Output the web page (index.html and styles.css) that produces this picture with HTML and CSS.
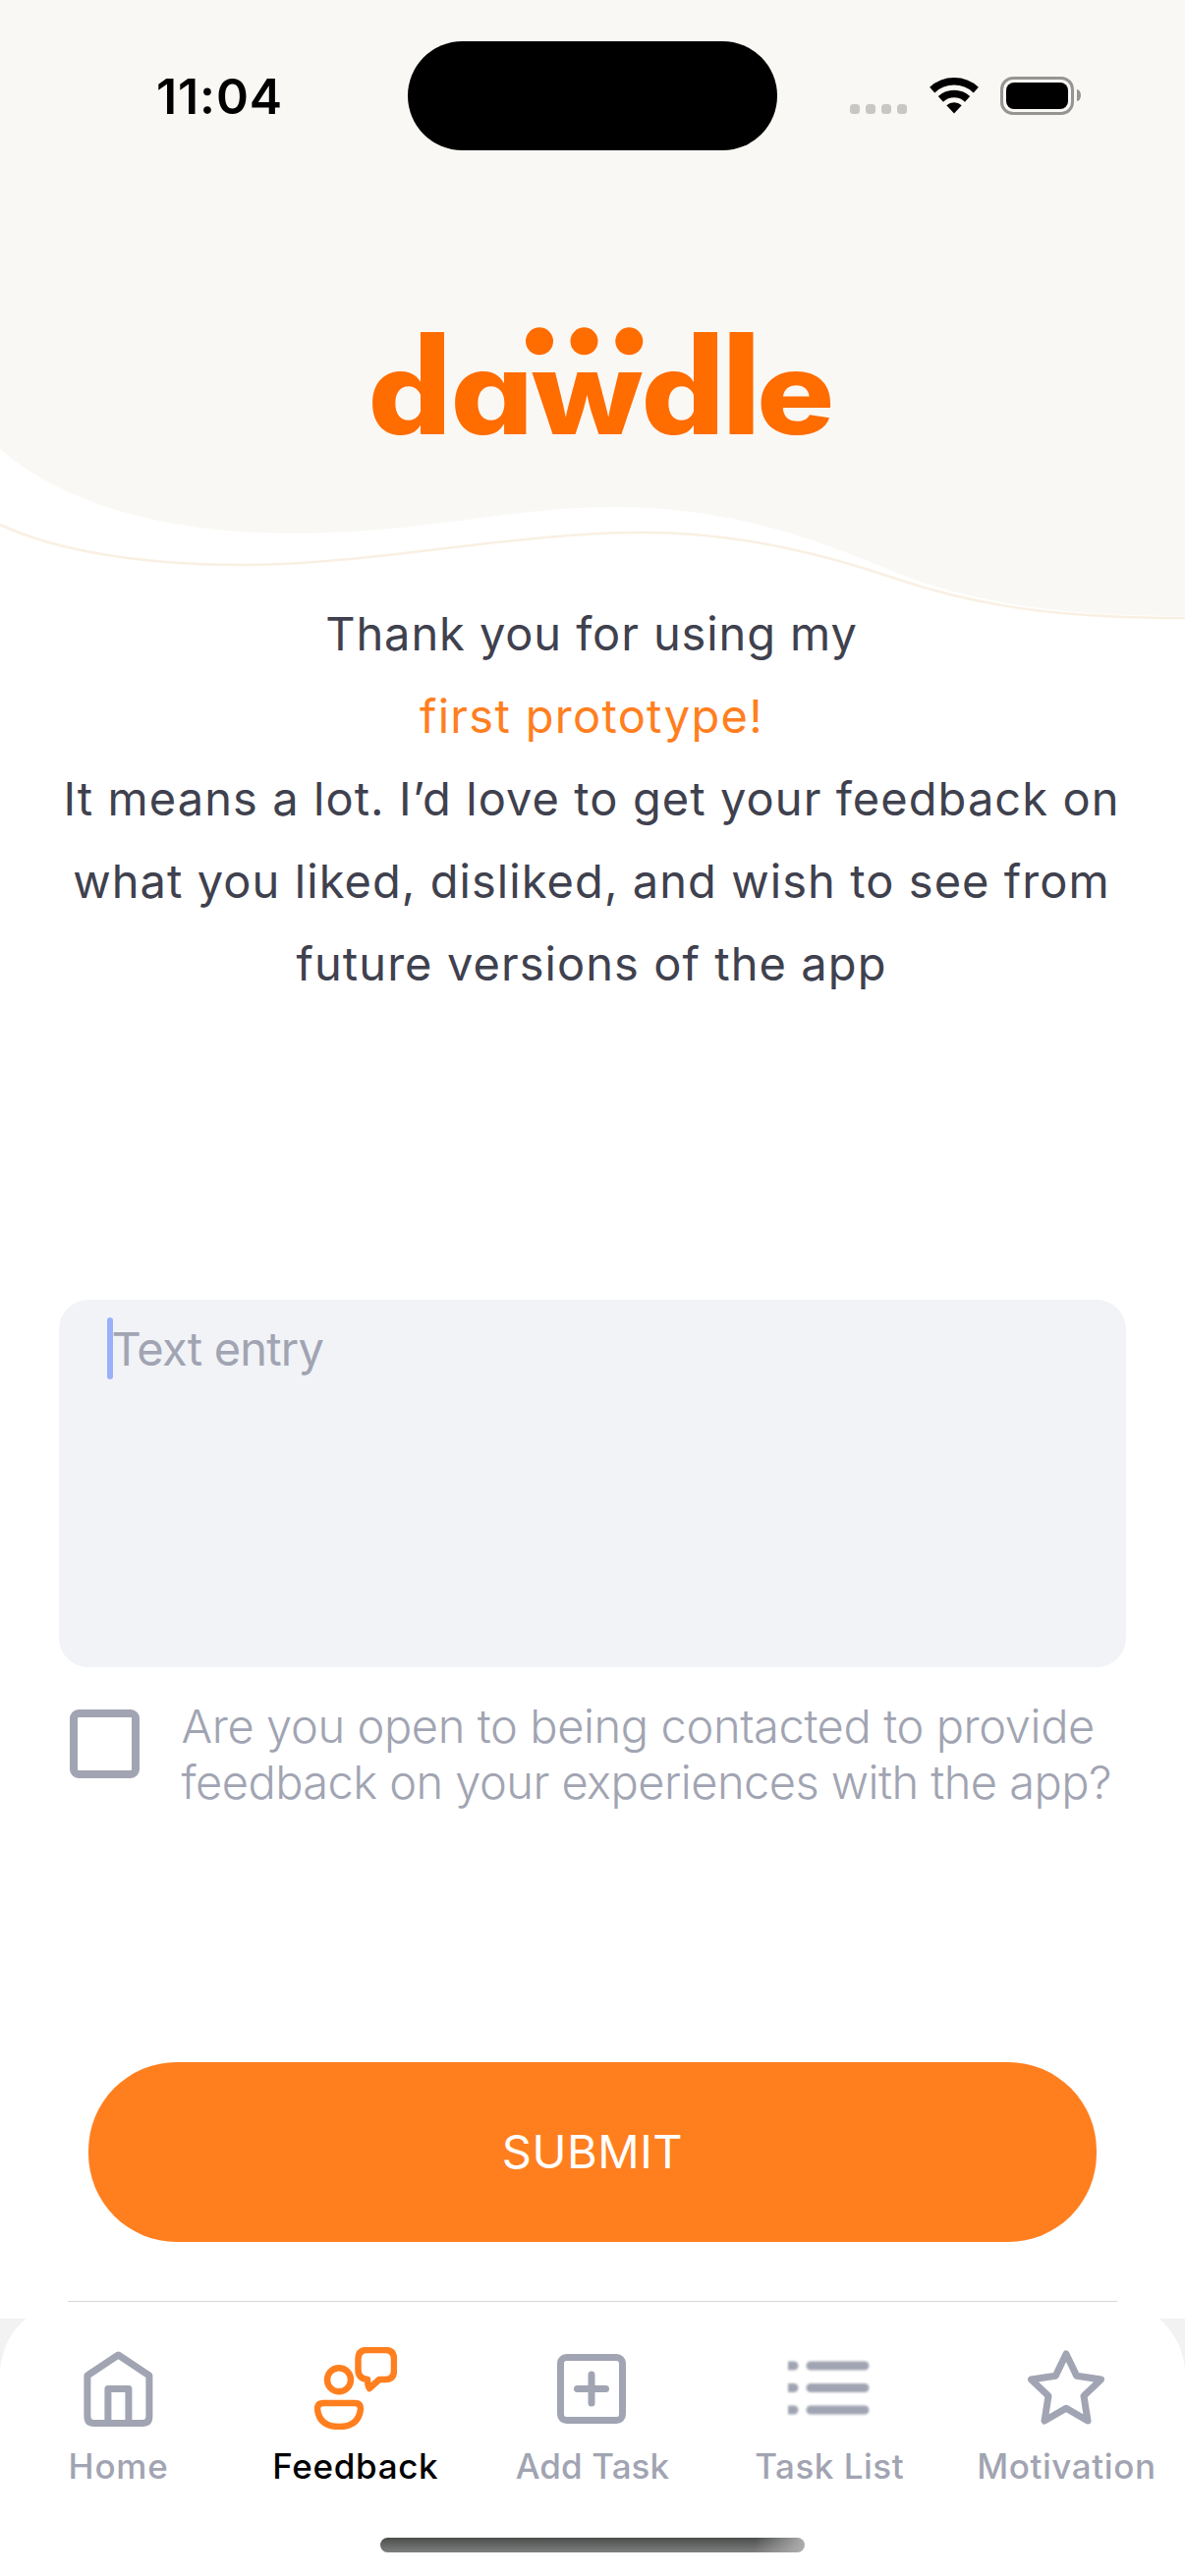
FILE: index.html
```html
<!DOCTYPE html>
<html lang="en">
<head>
<meta charset="utf-8">
<title>dawdle – Feedback</title>
<link rel="stylesheet" href="styles.css">
</head>
<body>
<main class="screen">
  <svg class="wave" width="1206" height="640" viewBox="0 0 1206 640" aria-hidden="true">
    <path class="wave-fill" d="M0 0H1206V627C1100 627 1010 619 923 587C850 558 760 516 625 516C520 516 430 543 296 543C165 543 60 510 0 457Z"/>
    <path class="wave-line" d="M0 534C60 562 150 575 246 575C380 575 520 542 654 542C760 542 850 568 915 590C1010 622 1100 629 1206 629"/>
  </svg>

  <header class="status">
    <div class="time">11:04</div>
    <div class="island"></div>
    <div class="indicators">
      <div class="signal"><i></i><i></i><i></i><i></i></div>
      <svg class="wifi" width="52" height="40" viewBox="0 0 52 40">
        <path class="wifi-arc" d="M3.7 13.6A32.7 32.7 0 0 1 48.3 13.6M12.4 22.9A20 20 0 0 1 39.6 22.9"/>
        <path d="M26 37.5L18.3 29.2A11.3 11.3 0 0 1 33.7 29.2Z"/>
      </svg>
      <div class="battery"><div class="charge"></div></div>
      <div class="nub"></div>
    </div>
  </header>

  <svg class="logo" width="520" height="160" viewBox="350 320 520 160">
    <text class="wordmark" transform="scale(1.15 1)" y="441.7" x="325.7 398.8 470 567.5 640 669.5">dawdle</text>
    <rect x="428" y="338" width="24" height="103.700"/>
    <rect x="706" y="338" width="24" height="103.700"/>
    <rect x="742.500" y="338" width="24" height="103.700"/>
    <circle cx="549" cy="347.3" r="14"/>
    <circle cx="594.5" cy="347.3" r="14"/>
    <circle cx="640.3" cy="347.3" r="14"/>
  </svg>

  <section class="intro">
    <div class="line greeting">Thank you for using my</div>
    <div class="line accent">first prototype!</div>
    <div class="line">It means a lot. I’d love to get your feedback on</div>
    <div class="line">what you liked, disliked, and wish to see from</div>
    <div class="line">future versions of the app</div>
  </section>

  <div class="entry"><span class="caret"></span>Text entry</div>

  <div class="consent">
    <div class="checkbox"></div>
    <div class="consent-label">
      <div class="consent-top">Are you open to being contacted to provide</div>
      <div class="consent-bottom">feedback on your experiences with the app?</div>
    </div>
  </div>

  <div class="submit">SUBMIT</div>

  <footer class="dock">
    <div class="panel">
      <div class="rule"></div>
      <nav class="tabs">
        <div class="tab">
          <svg class="icon" viewBox="0.6 0 84 84"><path d="M42 8L10.5 29V70.5Q10.5 77.5 17.5 77.5H66.5Q73.5 77.5 73.5 70.5V29ZM31.5 77V42.5H52.5V77"/></svg>
          <span class="name home">Home</span>
        </div>
        <div class="tab active">
          <svg class="icon soft" viewBox="0 0 84 84"><circle cx="25" cy="33.3" r="12"/><path d="M53.5 3H72Q81 3 81 12V24Q81 33 72 33H66L56 42Q54 39 54 33Q44.5 32 44.5 23V12Q44.5 3 53.5 3ZM9 57H41Q47 57 47 63Q45 81 25 81Q5 81 3 63Q3 57 9 57Z"/></svg>
          <span class="name feedback">Feedback</span>
        </div>
        <div class="tab">
          <svg class="icon" viewBox="1 0 84 84"><rect x="10.5" y="10.5" width="63" height="64" rx="6"/><path d="M27.5 42.5H56.5M42 28V57"/></svg>
          <span class="name addtask">Add Task</span>
        </div>
        <div class="tab">
          <svg class="icon list" viewBox="0 0 84 84"><path d="M1.5 19H6M1.5 41.5H6M1.5 64H6M23 19H78M23 41.5H78M23 64H78"/></svg>
          <span class="name tasklist">Task List</span>
        </div>
        <div class="tab">
          <svg class="icon" viewBox="0 0 84 84"><path d="M42 7L52.7 29.3L77.5 33L60 49.7L64 75L42 62.3L20 75L24 49.7L6.5 33L31.3 29.3Z"/></svg>
          <span class="name motivation">Motivation</span>
        </div>
      </nav>
      <div class="home-indicator"></div>
    </div>
  </footer>
</main>
</body>
</html>
```
FILE: styles.css
```css
* { box-sizing: border-box; }

body {
  margin: 0;
  background: #fff;
  font-family: Inter, "Liberation Sans", sans-serif;
}

.screen {
  position: relative;
  width: 1206px;
  height: 2622px;
  overflow: hidden;
  display: flex;
  flex-direction: column;
}

/* Cream backdrop behind the status bar and logo */
.wave { position: absolute; left: 0; top: 0; z-index: -1; }
.wave-fill { fill: #faf8f4; }
.wave-line { fill: none; stroke: #f9f0e3; stroke-width: 2.5; }

/* Status bar */
.status {
  display: grid;
  grid-template-columns: 415px 376px 415px;
  height: 112px;
  margin-top: 41px;
  align-items: center;
  color: #000;
}
.time {
  padding-left: 159px;
  padding-top: 2px;
  font-size: 50px;
  font-weight: 600;
  line-height: 60px;
  letter-spacing: 0.9px;
}
.island { height: 111px; border-radius: 56px; background: #000; }
.indicators { display: flex; align-items: center; padding-left: 74px; }
.signal { display: flex; gap: 6px; margin-top: 27px; }
.signal i { width: 10px; height: 10px; border-radius: 3.5px; background: #c8c7c4; }
.wifi { margin: 2px 21px 0 21.5px; }
.wifi-arc { fill: none; stroke: #000; stroke-width: 7.6px; }
.battery {
  width: 75px;
  height: 39px;
  padding: 3px;
  border: 3px solid #969593;
  border-radius: 13px;
}
.charge { height: 27px; border-radius: 8px; background: #000; }
.nub {
  width: 4px;
  height: 12px;
  margin-left: 3px;
  border-radius: 0 4px 4px 0 / 0 6px 6px 0;
  background: #969593;
}

/* Logo */
.logo { display: block; margin: 167px 0 0 350px; fill: #ff6c00; flex: none; }
.wordmark { font-size: 115px; font-weight: 800; font-feature-settings: "cv11"; }

/* Intro copy */
.intro {
  margin-top: 123px;
  font-size: 47px;
  line-height: 84px;
  letter-spacing: 1.07px;
  text-align: center;
  color: #3f414e;
}
.line { position: relative; left: -1px; white-space: nowrap; }
.greeting { letter-spacing: 0.9px; }
.accent { color: #ff7f1f; letter-spacing: 1.3px; }

/* Text box */
.entry {
  position: relative;
  height: 374px;
  margin: 300px 60px 0;
  padding: 21px 53.5px;
  border-radius: 30px;
  background: #f1f3f7;
  font-size: 47px;
  line-height: 57px;
  letter-spacing: -0.8px;
  color: #a1a4b2;
}
.caret {
  position: absolute;
  left: 49px;
  top: 18px;
  width: 6px;
  height: 63px;
  border-radius: 3px;
  background: #9bb0fa;
}

/* Contact consent */
.consent { display: flex; margin: 31px 0 0 71px; }
.checkbox {
  width: 71px;
  height: 70px;
  margin: 12px 42.5px 0 0;
  border: 8px solid #a1a4b2;
  border-radius: 9px;
}
.consent-label {
  font-size: 47px;
  font-weight: 300;
  line-height: 57px;
  white-space: nowrap;
  color: #a1a4b2;
}
.consent-top { letter-spacing: -0.4px; }
.consent-bottom { letter-spacing: -0.55px; }

/* Submit */
.submit {
  height: 183px;
  margin: 257px 90px 0;
  border-radius: 90px;
  background: #ff7f1f;
  color: #fff;
  font-size: 47px;
  line-height: 182px;
  letter-spacing: 0.5px;
  text-align: center;
}

/* Bottom tab bar */
.dock {
  height: 280px;
  margin-top: 60px;
  background: linear-gradient(#fff 18px, #f2f2f2 18px);
}
.panel { height: 280px; border-radius: 75px 75px 0 0; background: #fff; }
.rule { height: 1px; margin: 0 69px; background: #d8d8d8; }
.tabs { display: grid; grid-template-columns: repeat(5, 1fr); padding-top: 46px; }
.tab {
  display: flex;
  flex-direction: column;
  align-items: center;
  gap: 15px;
  color: #a1a4b2;
}
.icon {
  width: 84px;
  height: 84px;
  fill: none;
  stroke: #a1a4b2;
  stroke-width: 7px;
  stroke-linejoin: round;
  stroke-linecap: round;
}
.active .icon { stroke: #ff7f1f; stroke-width: 6.5px; }
.soft { filter: blur(0.6px); }
.list { stroke-width: 9px; filter: blur(1.2px); }
.name { font-size: 35px; font-weight: 500; line-height: 44px; white-space: nowrap; }
.active .name { color: #000; }
.home { letter-spacing: 0.8px; }
.feedback { letter-spacing: 0.65px; }
.addtask { letter-spacing: 0.1px; }
.tasklist { letter-spacing: 0.5px; }
.motivation { letter-spacing: 0.6px; }
.home-indicator {
  width: 432px;
  height: 15px;
  margin: 51px auto 0;
  border-radius: 8px;
  background:
    linear-gradient(100deg, rgba(176, 176, 176, 0) 88%, #b0b0b0 100%),
    linear-gradient(#4b4f4c, #7e7e7e);
}
```
